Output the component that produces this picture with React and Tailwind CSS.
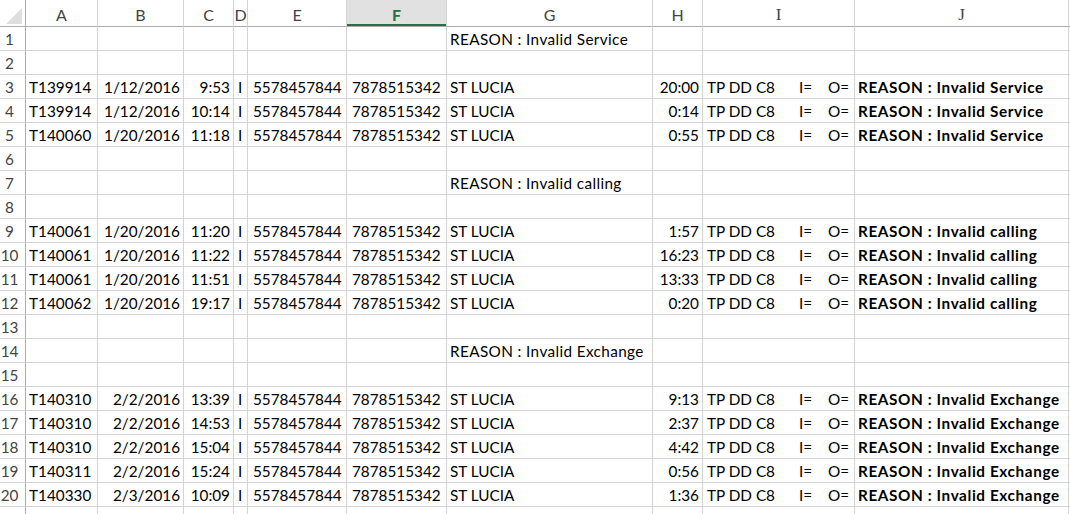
import React from "react";

const COLS = ["A", "B", "C", "D", "E", "F", "G", "H", "I", "J"];

const grid =
  "grid grid-cols-[26px_72px_86px_50px_14px_99px_100px_206px_50px_152px_214px_1fr]";

const rows = [
  { n: 1, reason: "REASON : Invalid Service" },
  { n: 2 },
  { n: 3, d: ["T139914", "1/12/2016", "9:53", "5578457844", "7878515342", "20:00", "REASON : Invalid Service"] },
  { n: 4, d: ["T139914", "1/12/2016", "10:14", "5578457844", "7878515342", "0:14", "REASON : Invalid Service"] },
  { n: 5, d: ["T140060", "1/20/2016", "11:18", "5578457844", "7878515342", "0:55", "REASON : Invalid Service"] },
  { n: 6 },
  { n: 7, reason: "REASON : Invalid calling" },
  { n: 8 },
  { n: 9, d: ["T140061", "1/20/2016", "11:20", "5578457844", "7878515342", "1:57", "REASON : Invalid calling"] },
  { n: 10, d: ["T140061", "1/20/2016", "11:22", "5578457844", "7878515342", "16:23", "REASON : Invalid calling"] },
  { n: 11, d: ["T140061", "1/20/2016", "11:51", "5578457844", "7878515342", "13:33", "REASON : Invalid calling"] },
  { n: 12, d: ["T140062", "1/20/2016", "19:17", "5578457844", "7878515342", "0:20", "REASON : Invalid calling"] },
  { n: 13 },
  { n: 14, reason: "REASON : Invalid Exchange" },
  { n: 15 },
  { n: 16, d: ["T140310", "2/2/2016", "13:39", "5578457844", "7878515342", "9:13", "REASON : Invalid Exchange"] },
  { n: 17, d: ["T140310", "2/2/2016", "14:53", "5578457844", "7878515342", "2:37", "REASON : Invalid Exchange"] },
  { n: 18, d: ["T140310", "2/2/2016", "15:04", "5578457844", "7878515342", "4:42", "REASON : Invalid Exchange"] },
  { n: 19, d: ["T140311", "2/2/2016", "15:24", "5578457844", "7878515342", "0:56", "REASON : Invalid Exchange"] },
  { n: 20, d: ["T140330", "2/3/2016", "10:09", "5578457844", "7878515342", "1:36", "REASON : Invalid Exchange"] },
  { n: 21 },
];

const cell =
  "h-[24px] border-r border-b border-[#d4d4d4] pt-[1px] leading-[22px] whitespace-nowrap overflow-hidden";

function Row({ r }) {
  const d = r.d;
  return (
    <>
      <div className="h-[24px] border-r border-b border-r-[#ababab] border-b-[#d4d4d4] pt-[1px] leading-[22px] text-[#444] text-center pr-[6px] whitespace-nowrap overflow-hidden">
        {r.n}
      </div>
      <div className={cell + " pl-[3px]"}>{d ? d[0] : ""}</div>
      <div className={cell + " pr-[3px] text-right"}>{d ? d[1] : ""}</div>
      <div className={cell + " pr-[3px] text-right"}>{d ? d[2] : ""}</div>
      <div className={cell + " pl-[4px]"}>{d ? "I" : ""}</div>
      <div className={cell + " pl-[5px]"}>{d ? d[3] : ""}</div>
      <div className={cell + " pl-[5px]"}>{d ? d[4] : ""}</div>
      <div className={cell + " pl-[3px]"}>
        {d ? "ST LUCIA" : r.reason ? <span className="tracking-[0.38px]">{r.reason}</span> : ""}
      </div>
      <div className={cell + " pr-[3px] text-right"}>{d ? d[5] : ""}</div>
      <div className={cell + " pl-[4px]"}>
        {d ? (
          <div className="grid grid-cols-[92px_29px_auto]">
            <span>TP DD C8</span>
            <span>I=</span>
            <span>O=</span>
          </div>
        ) : (
          ""
        )}
      </div>
      <div className={cell + " pl-[3px] font-bold tracking-[0.6px]"}>{d ? d[6] : ""}</div>
      <div className="h-[24px] border-b border-[#d4d4d4]"></div>
    </>
  );
}

export default function App() {
  return (
    <div
      className="w-[1070px] h-[514px] overflow-hidden bg-white text-black text-[15.3px]"
      style={{ fontFamily: "Lato, 'Open Sans', sans-serif" }}
    >
      <div className={grid}>
        <div className="h-[27px] border-r border-b border-[#ababab] flex items-end justify-end pr-[3px] pb-[2px]">
          <svg width="16" height="16" viewBox="0 0 16 16">
            <polygon points="0,16 16,0 16,16" fill="#dfdfdf" />
          </svg>
        </div>
        {COLS.map((c) => {
          const sel = c === "F";
          const serif = c === "I" || c === "J";
          return (
            <div
              key={c}
              className={
                "h-[27px] border-r border-b border-r-[#d4d4d4] border-b-[#ababab] text-center leading-[23px] pt-[3px] text-[16px] " +
                (sel
                  ? "bg-[#e1e1e1] text-[#217346] font-bold shadow-[inset_0_-2px_0_#217346]"
                  : "text-[#444]")
              }
              style={serif ? { fontFamily: "'Liberation Serif', serif", fontSize: "17px" } : undefined}
            >
              {c}
            </div>
          );
        })}
        <div className="h-[27px] border-b border-[#ababab]"></div>

        {rows.map((r) => (
          <Row key={r.n} r={r} />
        ))}
      </div>
    </div>
  );
}
